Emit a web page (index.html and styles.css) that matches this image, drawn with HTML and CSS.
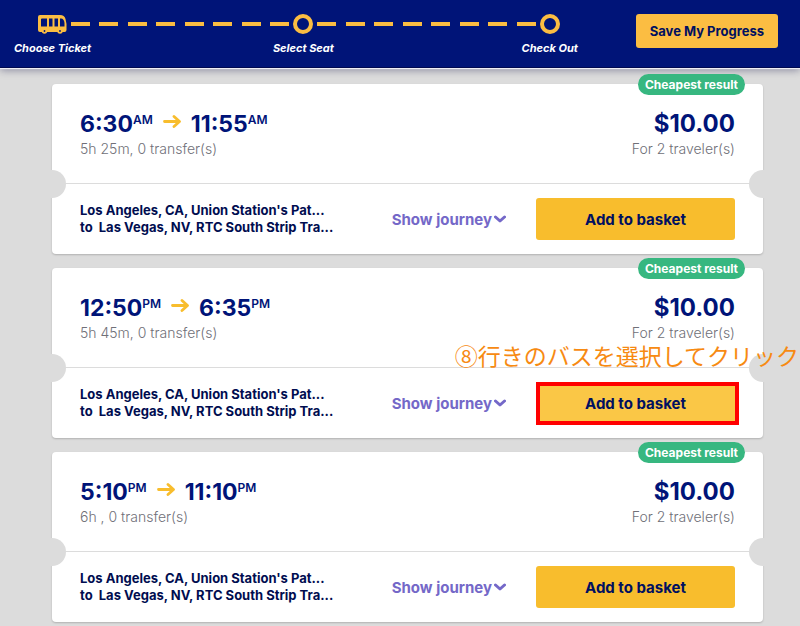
FILE: index.html
```html
<!DOCTYPE html>
<html lang="en">
<head>
<meta charset="utf-8">
<meta name="viewport" content="width=device-width, initial-scale=1">
<title>Choose Ticket</title>
<link rel="stylesheet" href="styles.css">
</head>
<body>
<svg class="sprite" aria-hidden="true">
  <symbol id="arrow" viewBox="0 0 18 16"><path d="M1.500 7.500H16M11 2.500L16.500 7.500L11 12.500" fill="none" stroke="currentColor" stroke-width="2.800" stroke-linecap="round" stroke-linejoin="round"/></symbol>
  <symbol id="chevron" viewBox="0 0 12 8"><path d="M1.500 2L6 6L10.500 2" fill="none" stroke="currentColor" stroke-width="3" stroke-linecap="round" stroke-linejoin="round"/></symbol>
</svg>
<header class="header">
  <ol class="steps">
    <li class="step step-bus">
      <svg class="bus" viewBox="0 0 29 19" aria-hidden="true">
        <path fill="#fbbd42" fill-rule="evenodd" d="M2 0H22Q26.500 0 27.500 4L28.500 9V15Q28.500 17 26.500 17H2Q0 17 0 15V2Q0 0 2 0ZM4 3.500Q3 3.500 3 4.500V11.500H9V3.500ZM11 3.500V11.500H14.500V3.500ZM16.500 3.500V11.500H20V3.500ZM22 3.500V11.500H26.500V8Q26 3.500 23 3.500Z"/>
        <g fill="#001478" stroke="#fbbd42" stroke-width="1.800"><circle cx="6.500" cy="16" r="1.800"/><circle cx="22" cy="16" r="1.800"/></g>
      </svg>
      <span class="step-label">Choose Ticket</span>
    </li>
    <li class="line" aria-hidden="true"><i></i><i></i><i></i><i></i><i></i><i></i><i></i><i></i></li>
    <li class="step"><span class="ring"></span><span class="step-label">Select Seat</span></li>
    <li class="line" aria-hidden="true"><i></i><i></i><i></i><i></i><i></i><i></i><i></i><i></i></li>
    <li class="step"><span class="ring"></span><span class="step-label">Check Out</span></li>
  </ol>
  <button class="save" type="button">Save My Progress</button>
</header>
<main class="results">
  <article class="ticket">
    <span class="badge">Cheapest result</span>
    <div class="summary">
      <div>
        <h2 class="times">6:30<sup>AM</sup><svg class="arrow" role="img" aria-label="to"><use href="#arrow"/></svg>11:55<sup>AM</sup></h2>
        <p class="note">5h 25m, 0 transfer(s)</p>
      </div>
      <div class="cost">
        <p class="price">$10.00</p>
        <p class="note">For 2 traveler(s)</p>
      </div>
    </div>
    <div class="details">
      <p class="route">Los Angeles, CA, Union Station's Pat...<br>to&nbsp; Las Vegas, NV, RTC South Strip Tra...</p>
      <button class="journey" type="button">Show journey<svg class="chevron" aria-hidden="true"><use href="#chevron"/></svg></button>
      <button class="add" type="button">Add to basket</button>
    </div>
  </article>
  <article class="ticket">
    <span class="badge">Cheapest result</span>
    <div class="summary">
      <div>
        <h2 class="times">12:50<sup>PM</sup><svg class="arrow" role="img" aria-label="to"><use href="#arrow"/></svg>6:35<sup>PM</sup></h2>
        <p class="note">5h 45m, 0 transfer(s)</p>
      </div>
      <div class="cost">
        <p class="price">$10.00</p>
        <p class="note">For 2 traveler(s)</p>
      </div>
    </div>
    <div class="details">
      <p class="route">Los Angeles, CA, Union Station's Pat...<br>to&nbsp; Las Vegas, NV, RTC South Strip Tra...</p>
      <button class="journey" type="button">Show journey<svg class="chevron" aria-hidden="true"><use href="#chevron"/></svg></button>
      <button class="add add-marked" type="button">Add to basket</button>
    </div>
    <p class="callout" lang="ja">⑧行きのバスを選択してクリック</p>
  </article>
  <article class="ticket">
    <span class="badge">Cheapest result</span>
    <div class="summary">
      <div>
        <h2 class="times">5:10<sup>PM</sup><svg class="arrow" role="img" aria-label="to"><use href="#arrow"/></svg>11:10<sup>PM</sup></h2>
        <p class="note">6h , 0 transfer(s)</p>
      </div>
      <div class="cost">
        <p class="price">$10.00</p>
        <p class="note">For 2 traveler(s)</p>
      </div>
    </div>
    <div class="details">
      <p class="route">Los Angeles, CA, Union Station's Pat...<br>to&nbsp; Las Vegas, NV, RTC South Strip Tra...</p>
      <button class="journey" type="button">Show journey<svg class="chevron" aria-hidden="true"><use href="#chevron"/></svg></button>
      <button class="add" type="button">Add to basket</button>
    </div>
  </article>
</main>
</body>
</html>
```
FILE: styles.css
```css
* { box-sizing: border-box; }
body {
  margin: 0;
  background: #dcdcdc;
  color: #001478;
  font-family: Inter, "Liberation Sans", sans-serif;
}
h2, p, ol { margin: 0; padding: 0; }
button { border: 0; font-family: inherit; font-weight: 700; cursor: pointer; }
.sprite { position: absolute; width: 0; height: 0; }

.header {
  display: flex;
  align-items: flex-start;
  gap: 76px;
  padding: 14px 22px 11px 38px;
  background: #001478;
  border-bottom: 1px solid #00094f;
  box-shadow: 0 1px 1px #eeeef6, 0 2px 8px rgba(0, 0, 60, 0.4);
}
.steps { display: flex; flex: 1; gap: 4px; list-style: none; }
.step {
  display: flex;
  flex-direction: column;
  align-items: center;
  gap: 6px;
  width: 20px;
}
.step-bus { width: 29px; }
.bus { width: 29px; height: 20px; padding-top: 1px; }
.ring { width: 20px; height: 20px; border: 4px solid #fbbd42; border-radius: 50%; }
.step-label {
  color: #fff;
  font-size: 11px;
  font-style: italic;
  font-weight: 700;
  line-height: 16px;
  white-space: nowrap;
}
.line { display: flex; flex: 1; justify-content: space-between; align-items: center; height: 20px; }
.line i { width: 19px; height: 4px; background: #fbbd42; }
.save {
  padding: 0 14px;
  height: 34px;
  border-radius: 3px;
  background: #fbbd42;
  color: #001060;
  font-size: 13px;
  white-space: nowrap;
}

.results {
  display: flex;
  flex-direction: column;
  gap: 14px;
  padding: 16px 37px 4px 52px;
}
.ticket {
  position: relative;
  background: #fff;
  border-radius: 4px;
  box-shadow: 0 1px 2px rgba(0, 0, 0, 0.2);
}
.badge {
  position: absolute;
  top: -10px;
  right: 18px;
  padding: 0 7px;
  border-radius: 11px;
  background: #37b780;
  color: #fff;
  font-size: 12px;
  font-weight: 700;
  line-height: 21px;
}
.summary {
  position: relative;
  display: flex;
  justify-content: space-between;
  padding: 26px 28px 23px;
  border-bottom: 1px solid #dcdcdc;
}
.summary::before, .summary::after {
  content: "";
  position: absolute;
  bottom: -15px;
  width: 16px;
  height: 28px;
  background: #dcdcdc;
}
.summary::before { left: -2px; border-radius: 0 14px 14px 0; }
.summary::after { right: -2px; border-radius: 14px 0 0 14px; }
.times { display: flex; font-size: 23px; font-weight: 700; line-height: 28px; }
.times sup { font-size: 12px; font-weight: 600; line-height: 20px; }
.price { font-size: 24px; font-weight: 700; line-height: 28px; }
.arrow { width: 18px; height: 16px; margin: 4px 10px 0; color: #f8bd2d; }
.note { color: #707078; font-size: 14px; font-weight: 300; line-height: 22px; }
.cost { text-align: right; }
.details {
  display: flex;
  align-items: center;
  padding: 14px 28px;
}
.route { flex: 1; color: #000d50; font-size: 13px; font-weight: 700; line-height: 17px; white-space: nowrap; }
.journey {
  display: flex;
  align-items: center;
  gap: 2px;
  margin-right: 30px;
  padding: 0;
  background: none;
  color: #7468c8;
  font-size: 15px;
}
.chevron { width: 12px; height: 8px; }
.add {
  position: relative;
  width: 199px;
  height: 42px;
  border-radius: 3px;
  background: #f8bd2d;
  color: #001060;
  font-size: 15px;
}
.add-marked { background: #fac746; }
.add-marked::after {
  content: "";
  position: absolute;
  inset: 0 -4px -1px 0;
  border: 4px solid #f00;
}
.callout {
  position: absolute;
  right: -36px;
  top: 76px;
  color: #f78a12;
  font-family: "Noto Sans CJK JP", sans-serif;
  font-size: 23px;
  line-height: 22px;
  white-space: nowrap;
}
```
